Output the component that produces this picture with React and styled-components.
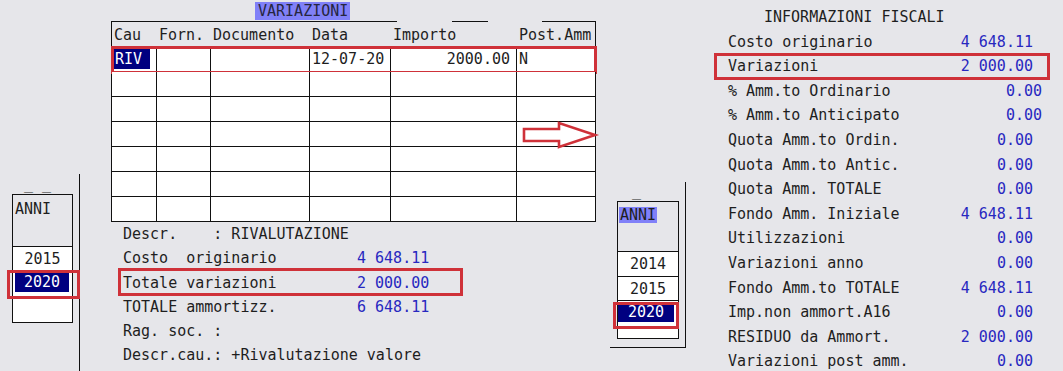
import React from "react";
import styled, { createGlobalStyle } from "styled-components";

const GlobalStyle = createGlobalStyle`
  * { box-sizing: border-box; }
  body {
    margin: 0;
    background: #e6e6ea;
  }
`;

const RED = "#cf3139";
const BLUE = "#2828c0";
const NAVY = "#000080";
const INK = "#1e1e1e";

const Page = styled.div`
  display: flex;
  align-items: flex-start;
  width: 1063px;
  height: 371px;
  overflow: hidden;
  background: #e6e6ea;
  color: ${INK};
  font-family: "DejaVu Sans Mono", "Liberation Mono", monospace;
  font-size: 15px;
  font-feature-settings: "zero" 1;
  font-variant-numeric: slashed-zero;
`;

// ---- year pickers ----
const LeftRail = styled.div`
  flex-shrink: 0;
  width: 80px;
  height: 197px;
  margin-top: 174px;
  border-right: 1px solid #111;
`;

const RightRail = styled.div`
  flex-shrink: 0;
  width: 76px;
  height: 166px;
  margin-top: 182px;
  border-right: 1px solid #111;
  border-bottom: 1px solid #111;
`;

const Dashes = styled.div`
  height: ${(p) => p.$h}px;
  line-height: ${(p) => p.$h}px;
  padding-left: ${(p) => p.$x}px;
  white-space: pre;
`;

const YearBox = styled.div`
  margin-left: ${(p) => p.$x}px;
  width: ${(p) => p.$w}px;
  border: 1px solid #111;
  background: #fff;
`;

const YearHead = styled.div`
  height: ${(p) => p.$h}px;
  padding: ${(p) => p.$pad};
  line-height: 18px;
  background: #e6e6ea;
  border-bottom: 1px solid #111;
`;

const Tag = styled.span`
  display: inline-block;
  height: 16px;
  line-height: 16px;
  padding: 0 1px;
  background: #8080f8;
`;

const YearRow = styled.div`
  position: relative;
  height: ${(p) => p.$h}px;
  line-height: ${(p) => p.$h}px;
  text-align: center;
  border-bottom: ${(p) => (p.$lined ? "1px solid #111" : "none")};
`;

const Selected = styled.div`
  height: 19px;
  margin: ${(p) => p.$m};
  line-height: 19px;
  text-align: center;
  background: ${NAVY};
  color: #fff;
`;

const RedMark = styled.span`
  position: absolute;
  top: ${(p) => p.$t}px;
  right: ${(p) => p.$r}px;
  bottom: ${(p) => p.$b}px;
  left: ${(p) => p.$l}px;
  border: 3px solid ${RED};
  pointer-events: none;
`;

// ---- variazioni table ----
const Center = styled.div`
  flex-shrink: 0;
  width: 530px;
  padding: 2px 0 0 31px;
`;

const TitleBar = styled.div`
  height: 19px;
  padding-left: 144px;
`;

const TitleTag = styled.span`
  display: inline-block;
  height: 18px;
  line-height: 18px;
  padding: 0 2px 0 3px;
  background: #8080f8;
  color: #262640;
`;

const Rule = styled.div`
  display: flex;
  height: 1px;
`;

const RuleSeg = styled.div`
  width: ${(p) => p.$w}px;
  margin-left: ${(p) => p.$gap || 0}px;
  background: #111;
`;

const Grid = styled.div`
  position: relative;
  width: 485px;
  border-left: 1px solid #111;
`;

const GridRow = styled.div`
  position: relative;
  display: grid;
  grid-template-columns: 45px 54px 99px 81px 126px 79px;
  height: 25px;
`;

const HeadCell = styled.div`
  padding: 2px 0 0 2px;
  line-height: 22px;
  white-space: pre;
  border-bottom: 1px solid #111;
  border-right: ${(p) => (p.$last ? "1px solid #111" : "none")};
`;

const Cell = styled.div`
  padding: 0 ${(p) => (p.$right ? "6px" : "0")} 0 2px;
  line-height: 24px;
  text-align: ${(p) => (p.$right ? "right" : "left")};
  white-space: pre;
  background: #fff;
  border-right: 1px solid #111;
  border-bottom: 1px solid #111;
`;

const CodeTag = styled.div`
  width: 37px;
  height: 20px;
  margin: 2px 0 0 -1px;
  padding-left: 2px;
  line-height: 20px;
  background: ${NAVY};
  color: #fff;
`;

const Arrow = styled.svg`
  position: absolute;
  left: 411px;
  top: 100px;
  overflow: visible;
`;

const Info = styled.div`
  padding-left: 12px;
`;

const InfoLine = styled.div`
  position: relative;
  display: grid;
  grid-template-columns: 234px auto;
  width: 335px;
  height: 24.3px;
  line-height: 24.3px;
  white-space: pre;
`;

const Amount = styled.span`
  color: ${BLUE};
  margin-right: ${(p) => (p.$shift ? -9 : 0)}px;
`;

// ---- informazioni fiscali ----
const Fiscal = styled.div`
  flex: 1;
  padding: 5px 0 0 42px;
`;

const FiscalTitle = styled.div`
  padding-left: 36px;
  height: 24.6px;
  line-height: 24.6px;
`;

const FiscalRow = styled.div`
  position: relative;
  display: flex;
  justify-content: space-between;
  width: 305px;
  height: 24.6px;
  line-height: 24.6px;
  white-space: pre;
`;

const columns = ["Cau", "Forn.", "Documento", "Data", "Importo", "Post.Amm"];

const fiscalRows = [
  { label: "Costo originario", value: "4 648.11" },
  { label: "Variazioni", value: "2 000.00", mark: true },
  { label: "% Amm.to Ordinario", value: "0.00", shift: true },
  { label: "% Amm.to Anticipato", value: "0.00", shift: true },
  { label: "Quota Amm.to Ordin.", value: "0.00" },
  { label: "Quota Amm.to Antic.", value: "0.00" },
  { label: "Quota Amm. TOTALE", value: "0.00" },
  { label: "Fondo Amm. Iniziale", value: "4 648.11" },
  { label: "Utilizzazioni", value: "0.00" },
  { label: "Variazioni anno", value: "0.00" },
  { label: "Fondo Amm.to TOTALE", value: "4 648.11" },
  { label: "Imp.non ammort.A16", value: "0.00" },
  { label: "RESIDUO da Ammort.", value: "2 000.00" },
  { label: "Variazioni post amm.", value: "0.00" },
];

const App = () => {
  return (
    <Page>
      <GlobalStyle />

      <LeftRail>
        <Dashes $h={20} $x={24}>_ _</Dashes>
        <YearBox $x={12} $w={61}>
          <YearHead $h={52} $pad="5px 2px">ANNI</YearHead>
          <YearRow $h={24}>2015</YearRow>
          <YearRow $h={24}>
            <Selected $m="2px 3px 0 2px">2020</Selected>
            <RedMark $t={-3} $b={-2} $l={-6} $r={-8} />
          </YearRow>
          <YearRow $h={25} />
        </YearBox>
      </LeftRail>

      <Center>
        <TitleBar>
          <TitleTag>VARIAZIONI</TitleTag>
        </TitleBar>
        <Rule>
          <RuleSeg $w={286} />
          <RuleSeg $w={36} $gap={55} />
          <RuleSeg $w={54} $gap={54} />
        </Rule>
        <Grid>
          <GridRow>
            {columns.map((c, i) => (
              <HeadCell key={c} $last={i === columns.length - 1}>{c}</HeadCell>
            ))}
          </GridRow>
          <GridRow>
            <Cell><CodeTag>RIV</CodeTag></Cell>
            <Cell />
            <Cell />
            <Cell>12-07-20</Cell>
            <Cell $right>2000.00</Cell>
            <Cell>N</Cell>
            <RedMark $t={-1} $b={-2} $l={-1} $r={-1} />
          </GridRow>
          {[0, 1, 2, 3, 4, 5].map((r) => (
            <GridRow key={r}>
              {columns.map((c) => <Cell key={c} />)}
            </GridRow>
          ))}
          <Arrow width="74" height="26" viewBox="0 0 74 26">
            <path d="M1 7 H36 V1 L72 13 L36 25 V19 H1 Z" fill="none" stroke={RED} strokeWidth="2.6" />
          </Arrow>
        </Grid>
        <Info>
          <InfoLine><span>{"Descr.    : RIVALUTAZIONE"}</span></InfoLine>
          <InfoLine><span>{"Costo  originario"}</span><Amount>4 648.11</Amount></InfoLine>
          <InfoLine>
            <span>Totale variazioni</span><Amount>2 000.00</Amount>
            <RedMark $t={-3} $b={-1} $l={-5} $r={-5} />
          </InfoLine>
          <InfoLine><span>TOTALE ammortizz.</span><Amount>6 648.11</Amount></InfoLine>
          <InfoLine><span>Rag. soc. :</span></InfoLine>
          <InfoLine><span>Descr.cau.: +Rivalutazione valore</span></InfoLine>
        </Info>
      </Center>

      <RightRail>
        <Dashes $h={19} $x={22}>_</Dashes>
        <YearBox $x={7} $w={62}>
          <YearHead $h={50} $pad="4px 1px">
            <Tag>ANNI</Tag>
          </YearHead>
          <YearRow $h={25} $lined>2014</YearRow>
          <YearRow $h={24} $lined>2015</YearRow>
          <YearRow $h={25}>
            <Selected $m="2px 4px 0 0">2020</Selected>
            <RedMark $t={-1} $b={-1} $l={-5} $r={-1} />
          </YearRow>
          <YearRow $h={10} />
        </YearBox>
      </RightRail>

      <Fiscal>
        <FiscalTitle>INFORMAZIONI FISCALI</FiscalTitle>
        {fiscalRows.map((row) => (
          <FiscalRow key={row.label}>
            <span>{row.label}</span>
            <Amount $shift={row.shift}>{row.value}</Amount>
            {row.mark && <RedMark $t={-1} $b={-1} $l={-14} $r={-17} />}
          </FiscalRow>
        ))}
      </Fiscal>
    </Page>
  );
};

export default App;
